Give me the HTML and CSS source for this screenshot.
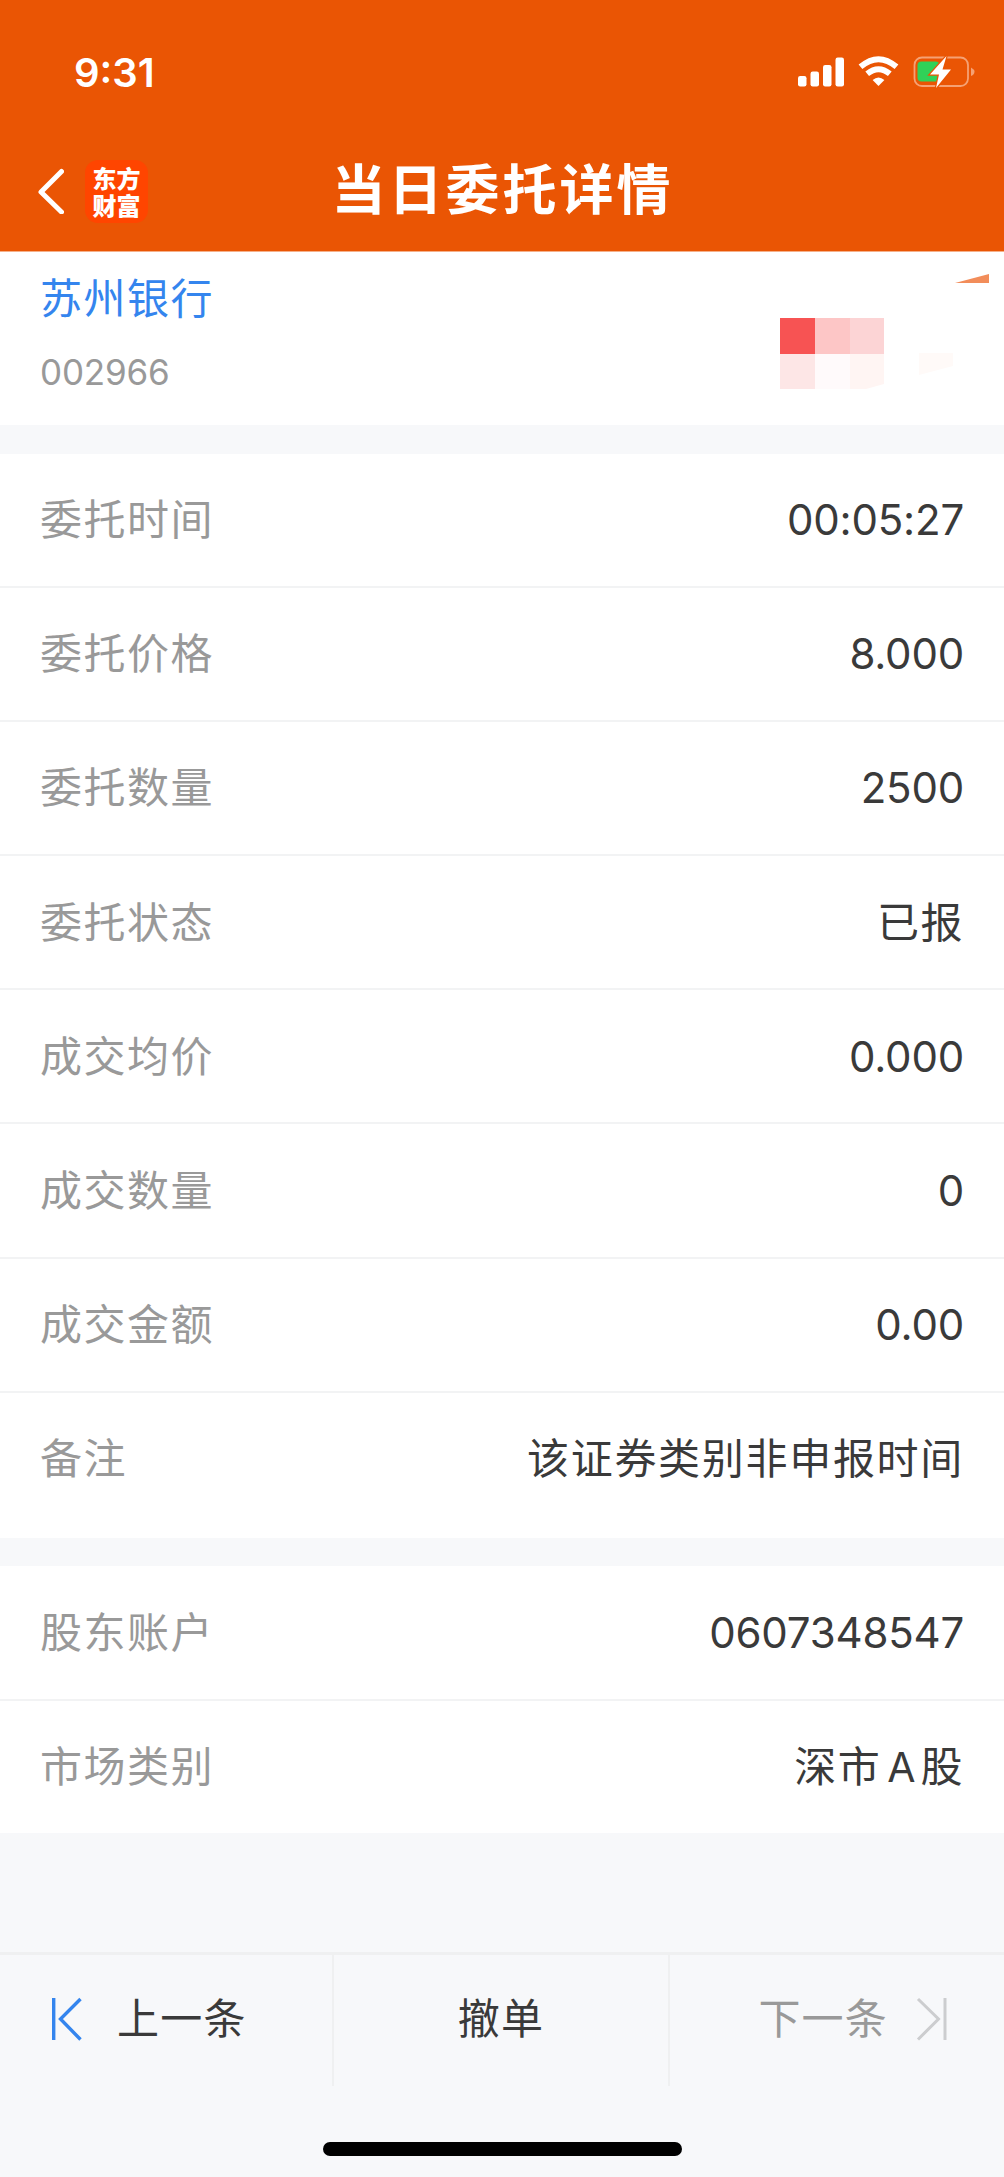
FILE: index.html
```html
<!DOCTYPE html>
<html lang="zh-CN">
<head>
<meta charset="utf-8">
<title>当日委托详情</title>
<link rel="stylesheet" href="styles.css">
</head>
<body>
<header class="header">
  <div class="status">
    <span class="clock">9:31</span>
    <svg class="status-icons" viewBox="0 0 184 36" width="184" height="36">
      <g fill="#fff">
        <rect x="3" y="22" width="8.5" height="10.5" rx="2.2"/>
        <rect x="15.5" y="17.5" width="8.5" height="15" rx="2.2"/>
        <rect x="28" y="11" width="8.5" height="21.5" rx="2.2"/>
        <rect x="40.5" y="3.5" width="8.5" height="29" rx="2.2"/>
        <path d="M83.500 32 L77.600 26 Q83.500 21 89.400 26 Z"/>
      </g>
      <g fill="none" stroke="#fff" stroke-width="5.800">
        <path d="M65.500 12.800 Q83.500 -2.500 101.500 12.800"/>
        <path d="M72.200 19.800 Q83.500 10.500 94.800 19.800"/>
      </g>
      <rect x="119.500" y="3.500" width="53.500" height="28.500" rx="7.500" fill="none" stroke="#f5a174" stroke-width="1.800"/>
      <path d="M176 13.500 Q179.500 15.500 179.500 17.700 Q179.500 20.500 176 22 Z" fill="#f5a174"/>
      <rect x="122.500" y="7.500" width="22" height="20" rx="4" fill="#30d158"/>
      <path d="M151.500 2 L135 20.500 H144 L141 34 L156 15.500 H147.500 Z" fill="#fff" stroke="#ea5504" stroke-width="2.500" paint-order="stroke"/>
    </svg>
  </div>
  <nav class="nav">
    <div class="nav-side">
      <svg class="back" viewBox="0 0 28 46" width="28" height="46"><path d="M25.500 3.500 L5 24 L25.500 44" fill="none" stroke="#fff" stroke-width="5" stroke-linecap="round" stroke-linejoin="round"/></svg>
      <div class="logo">东方<br>财富</div>
    </div>
    <h1 class="title">当日委托详情</h1>
    <div class="nav-side"></div>
  </nav>
</header>
<main class="content">
  <section class="stock">
    <div>
      <div class="stock-name">苏州银行</div>
      <div class="stock-code">002966</div>
    </div>
    <svg class="mosaic" viewBox="0 0 224 170" width="224" height="170">
      <rect x="0" y="66" width="35" height="36" fill="#f75353"/>
      <rect x="35" y="66" width="35" height="36" fill="#fdc6c6"/>
      <rect x="70" y="66" width="34" height="36" fill="#fcd4d5"/>
      <rect x="0" y="102" width="35" height="35" fill="#fde6e6"/>
      <rect x="35" y="102" width="35" height="35" fill="#fffafb"/>
      <path d="M70 102 H104 V132 L86 137 H70 Z" fill="#fff5f3"/>
      <path d="M139 101 H173 V114 L139 123 Z" fill="#fffaf8"/>
      <path d="M175 31 L209 22 V31 Z" fill="#f28d5a"/>
    </svg>
  </section>
  <dl class="group">
    <div class="row"><dt>委托时间</dt><dd class="num">00:05:27</dd></div>
    <div class="row"><dt>委托价格</dt><dd class="num">8.000</dd></div>
    <div class="row"><dt>委托数量</dt><dd class="num">2500</dd></div>
    <div class="row"><dt>委托状态</dt><dd>已报</dd></div>
    <div class="row"><dt>成交均价</dt><dd class="num">0.000</dd></div>
    <div class="row"><dt>成交数量</dt><dd class="num">0</dd></div>
    <div class="row"><dt>成交金额</dt><dd class="num">0.00</dd></div>
    <div class="row remark"><dt>备注</dt><dd>该证券类别非申报时间</dd></div>
  </dl>
  <dl class="group account">
    <div class="row"><dt>股东账户</dt><dd class="num">0607348547</dd></div>
    <div class="row"><dt>市场类别</dt><dd>深市<span class="latin">A</span>股</dd></div>
  </dl>
</main>
<footer class="footer">
  <div class="actions">
    <div class="action prev">
      <svg viewBox="0 0 32 44" width="32" height="44"><path d="M2.700 1 V43 M29.500 2 L9.500 22 L29.500 42.500" fill="none" stroke="#3485ee" stroke-width="3.400"/></svg>
      <span>上一条</span>
    </div>
    <div class="action"><span>撤单</span></div>
    <div class="action next">
      <span>下一条</span>
      <svg viewBox="0 0 32 44" width="32" height="44"><path d="M29 1 V43 M2 2 L22.500 22 L2 42.500" fill="none" stroke="#cccdcf" stroke-width="3"/></svg>
    </div>
  </div>
  <div class="home-bar"></div>
</footer>
</body>
</html>
```

FILE: styles.css
```css
* { box-sizing: border-box; }
body {
  margin: 0;
  width: 1004px;
  height: 2177px;
  display: flex;
  flex-direction: column;
  background: #f7f8fa;
  font-family: Inter, "Noto Sans CJK SC", sans-serif;
  color: #3a3a3a;
}
.header { height: 252px; background: #ea5504; color: #fff; border-bottom: 1px solid #f5b08a; }
.status { height: 145px; padding: 54px 25px 0 74px; display: flex; justify-content: space-between; align-items: flex-start; }
.clock { font-size: 40px; line-height: 38px; font-weight: 600; }
.status-icons { display: block; }
.nav { height: 92px; display: flex; align-items: center; justify-content: space-between; padding: 0 36px; }
.nav-side { width: 200px; display: flex; align-items: center; gap: 21px; }
.logo {
  width: 63px; height: 63px; border-radius: 13px; background: #ff4500;
  padding-top: 4px;
  font: 900 24px/27px "Noto Sans CJK SC", sans-serif; text-align: center;
}
.title { margin: 0; font-size: 54px; line-height: 80px; font-weight: 600; letter-spacing: 3px; padding-left: 1px; }
.stock { height: 173px; background: #fff; display: flex; justify-content: space-between; padding-left: 40px; }
.stock-name { margin-top: 17px; font-size: 42px; line-height: 60px; letter-spacing: 1.500px; color: #3485ee; }
.stock-code { margin-top: 19px; font-size: 35px; line-height: 48px; letter-spacing: -0.200px; color: #999; }
.group { margin: 28.500px 0 0; background: #fff; }
.row { height: 134.200px; padding: 1px 40px 0; display: flex; align-items: center; justify-content: space-between; border-bottom: 2px solid #f2f3f4; }
.row dt, .row dd { margin: 0; font-size: 42px; line-height: 60px; letter-spacing: 1.500px; }
.row dt { color: #999; }
.row .num { letter-spacing: -0.200px; }
.row.remark { height: 145px; border-bottom: 0; padding-top: 0; padding-bottom: 12px; }
.row.remark dd { letter-spacing: 1.700px; }
.account { margin-top: 28px; }
.account .row:first-child { height: 135.500px; }
.account .row:last-child { height: 132px; border-bottom: 0; padding-top: 0; }
.latin { margin: 0 5px 0 6px; font-size: 41px; letter-spacing: 0; }
.footer { margin-top: auto; height: 225px; border-top: 3px solid #eff0f1; }
.actions { height: 131px; display: grid; grid-template-columns: 332px 336px 336px; }
.action { display: flex; justify-content: center; align-items: center; font-size: 42px; line-height: 60px; letter-spacing: 1.200px; padding-bottom: 4px; }
.action + .action { border-left: 2px solid #eff0f1; }
.prev { justify-content: flex-start; padding-left: 51px; gap: 34px; }
.next { justify-content: flex-end; padding-right: 56px; gap: 28px; color: #999; }
.home-bar { width: 359px; height: 14px; border-radius: 7px; background: #000; margin: 56px auto 0; }
```
